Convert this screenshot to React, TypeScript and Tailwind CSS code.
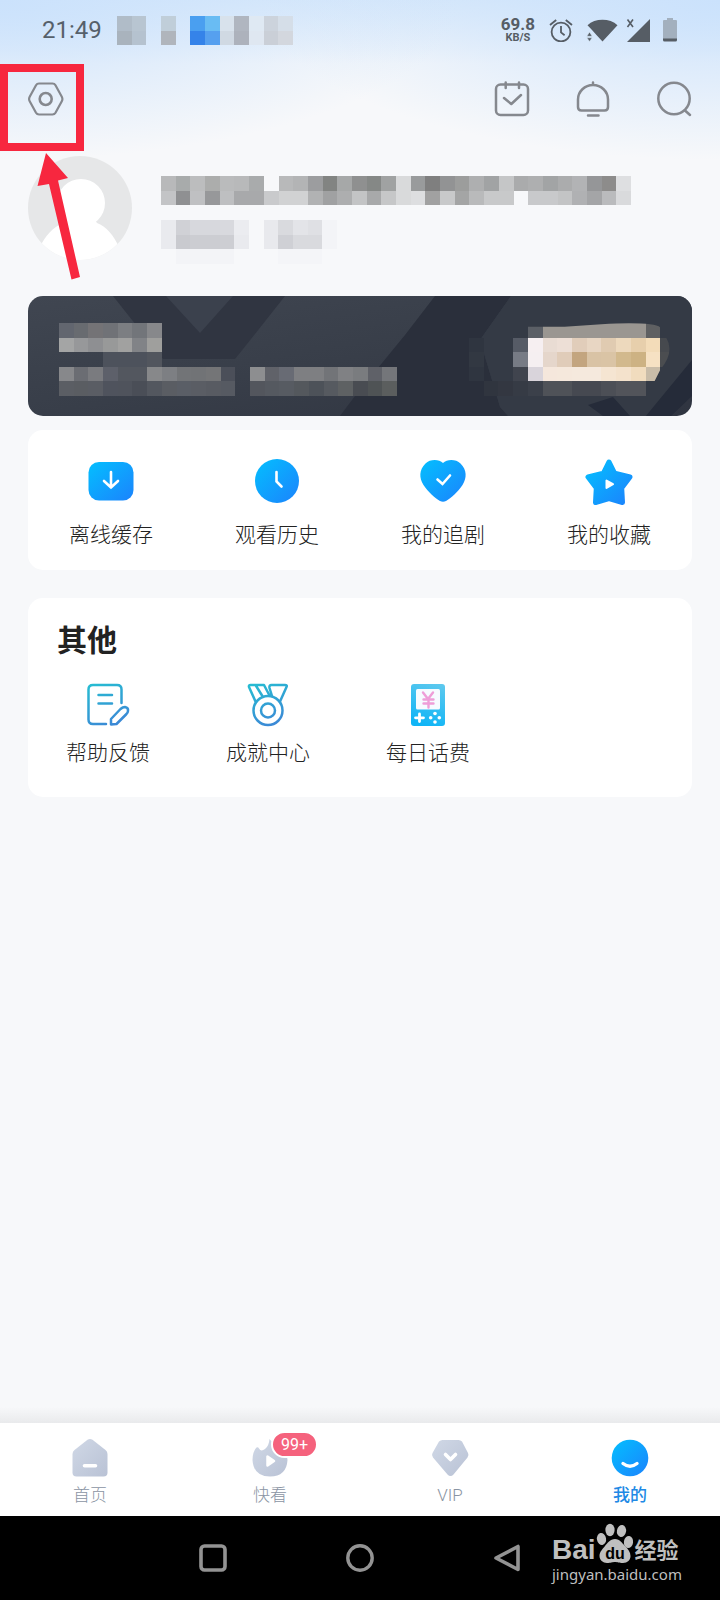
import React from "react";

type Row = string[];

const _ = "";

const STATUS_CELLS: Row[] = [
  ["#b0bcc8", "#b8c5d1", _, "#c0ced9", _, "#4a9ff0", "#69bcf3", "#d8e2ec", "#b0b6c0", "#dfe9f3", "#ccd3dc", "#d5dee8"],
  ["#a9b3bd", "#b5c2cf", _, "#b0b5bc", _, "#3583e9", "#56a0ef", "#d0d9e3", "#adb2bc", "#dfe7f1", "#cacfd7", "#d3d7de"],
];

const NAME_CELLS: Row[] = [
  ["#b8b9ba", "#a8abab", "#bcbdbe", "#acadac", "#babbbc", "#b8b9ba", "#a9abac", _, "#b8b9ba", "#b3b4b5", "#9c9d9f", "#828482", "#a6a8a8", "#8f9090", "#858886", "#a0a2a2", "#d9dadb", "#999b9c", "#7f7f7f", "#929394", "#9c9d9c", "#aeafb0", "#a1a3a4", "#c5c6c7", "#aaabac", "#aeafb0", "#a2a4a5", "#abacad", "#b2b3b5", "#959698", "#8d8c8b", "#dedfe1"],
  ["#c3c4c6", "#8f9092", "#bfc0c2", "#97989a", "#bebfc1", "#a8a9ab", "#a8a9ab", "#c9cacc", "#d1d2d3", "#d1d2d3", "#b1b2b3", "#a0a1a2", "#adaeaf", "#c3c4c5", "#a8a9aa", "#c6c7c8", "#d9dadb", "#dddee0", "#a1a1a1", "#c8c9ca", "#a4a5a5", "#b9babb", "#c8c9ca", "#c8c9ca", _, "#c8c9cb", "#c8c9cb", "#c3c4c5", "#b0b1b3", "#a4a5a7", "#babbbd", "#d9dadc"],
];

const TAG_CELLS: Row[] = [
  ["#e9eaee", "#d0d1d6", "#d7d8dd", "#d7d8dd", "#d8d9de", "#ebecf0", _, "#e8e9ed", "#d9dade", "#e3e4e8", "#dfe0e4", "#f3f4f7"],
  ["#e9eaee", "#c9cacf", "#cccdd2", "#cccdd2", "#cdced3", "#e9eaee", _, "#e8e9ed", "#cfd0d5", "#d9dade", "#d9dade", "#f3f4f7"],
  [_, "#f3f4f7", "#f3f4f7", "#f3f4f7", "#f3f4f7", _, _, _, "#f4f5f8", "#f4f5f8", "#f4f5f8", _],
];

const VIP_CELLS: Row[] = [
  ["#62666f", "#686b70", "#747376", "#707277", "#7c7e82", "#72757a", "#87888b"],
  ["#a4a5a5", "#97989a", "#8e8f92", "#989999", "#a1a1a0", "#818387", "#9f9f9d"],
  [_, _, _, "#4d525c", "#4d525c", "#4d525c", "#52565e"],
  ["#87888b", "#6b6d73", "#7a7b7f", "#5d606a", "#53575f", "#53575f", "#87888a", "#7d7f83", "#727477", "#717376", "#747577", "#4b4f59", _, "#8d8e90", "#606269", "#686b74", "#7e7f82", "#7e7f82", "#727478", "#808184", "#7a7c7f", "#5f6168", "#74767a"],
  ["#5b5e64", "#5a5d62", "#5a5d64", "#4f535d", "#4f535c", "#4a4e57", "#53575f", "#5a5d63", "#5a5e66", "#5a5d64", "#585b62", "#565a62", _, "#53565d", "#555960", "#575b62", "#54585d", "#4d5259", "#565a60", "#5e6163", "#494c52", "#4f5355", "#5b5e5e"],
];

const VIP_BUTTON_CELLS: Row[] = [
  [_, _, _, _, "#5b5f66", "#9a9691", "#9a9691", "#9a9691", "#9a9691", "#9a9691", "#9a9691", "#9a9691", "#5f6062", _],
  ["#2f3540", _, _, "#565b66", "#f6eff1", "#e9dcd3", "#eddfd6", "#e1cdba", "#e8d6c3", "#e0cbb1", "#edd9bd", "#e7cfac", "#f3dcb9", "#46494e"],
  ["#323842", _, _, "#777b85", "#f5eff1", "#e5d6cb", "#e0ccb9", "#c3a57f", "#d9c3a5", "#dac4a5", "#d2b98d", "#cdb283", "#f6e1c3", "#4b4d50"],
  ["#2f3540", _, _, "#40444e", "#d9d4db", "#f5e7dc", "#f5e8dc", "#f5e9dd", "#f5e9dd", "#f5e5d2", "#f4e2cc", "#f1dcbe", "#c9bca8", _],
  [_, "#30353f", "#333741", "#363b45", "#3b404a", "#4f5258", "#4f5258", "#464951", "#464951", "#4c4f56", "#52545a", "#52545a", _, _],
];

function Mosaic({ rows, className, clip }: { rows: Row[]; className: string; clip?: string }) {
  const cols = Math.max(...rows.map((r) => r.length));
  return (
    <svg
      className={className}
      viewBox={`0 0 ${cols} ${rows.length}`}
      preserveAspectRatio="none"
      shapeRendering="crispEdges"
      aria-hidden="true"
    >
      {clip && (
        <clipPath id="mosaicClip">
          <path d={clip} />
        </clipPath>
      )}
      <g clipPath={clip ? "url(#mosaicClip)" : undefined}>
        {rows.map((row, y) =>
          row.map((fill, x) => fill && <rect key={`${x}-${y}`} x={x} y={y} width="1" height="1" fill={fill} />)
        )}
      </g>
    </svg>
  );
}

/* Shared gradients for the icons */
function Gradients() {
  return (
    <svg className="absolute w-0 h-0" aria-hidden="true">
      <defs>
        <linearGradient id="blue" x1="0" y1="0" x2="1" y2="1">
          <stop offset="0.1" stopColor="#06b9fe" />
          <stop offset="0.95" stopColor="#1a86fd" />
        </linearGradient>
        <linearGradient id="gray" x1="0" y1="0" x2="1" y2="1">
          <stop offset="0" stopColor="#d0d8e6" />
          <stop offset="1" stopColor="#b9c2d5" />
        </linearGradient>
        <linearGradient id="line" gradientUnits="userSpaceOnUse" x1="10" y1="3" x2="28" y2="46">
          <stop offset="0" stopColor="#27bbd2" />
          <stop offset="1" stopColor="#3c87d6" />
        </linearGradient>
        <linearGradient id="game" x1="0.8" y1="0" x2="0.5" y2="1">
          <stop offset="0" stopColor="#5cc8ee" />
          <stop offset="1" stopColor="#10b5f6" />
        </linearGradient>
      </defs>
    </svg>
  );
}

function StatusBar() {
  return (
    <div className="flex h-[60px] items-center justify-between pl-[42px] pr-[43px] text-[#56606a]">
      <div className="flex items-center gap-[15px]">
        <span className="text-2xl">21:49</span>
        <Mosaic rows={STATUS_CELLS} className="w-[176px] h-[29px]" />
      </div>
      <div className="flex items-center">
        <div className="mr-[14px] flex flex-col items-center font-bold text-[#565d65]">
          <span className="text-[17px] leading-4">69.8</span>
          <span className="text-[11px] leading-3">KB/S</span>
        </div>
        <svg className="mr-[13px] w-6 h-6" viewBox="0 0 24 24" fill="none" stroke="#565d65" strokeWidth="1.8">
          <circle cx="12" cy="14" r="9.4" />
          <path d="M12 8v6.4l3.6 2.8M1 7l6.200-5M23 7l-6.200-5" />
        </svg>
        <svg className="mr-2 w-8 h-6" viewBox="0 0 32 24" fill="#565d65">
          <path d="M1.500 7.200C9 0 24 0 31.500 7.200L16.500 23.500l-5.800-6.200L6 12z" />
          <path d="M.8 18.300L3.500 14l2.700 4.300zM.8 19.800h5.400L3.500 23.500z" stroke="#d8e9f9" strokeWidth="0.6" />
        </svg>
        <svg className="mr-[13px] w-6 h-6" viewBox="0 0 24 24" fill="#565d65">
          <path d="M24 1v23H1z" />
          <path d="M1.500 1.500l5.500 7.500M7 1.500L1.500 9" stroke="#565d65" strokeWidth="1.600" />
        </svg>
        <svg className="w-[14px] h-6" viewBox="0 0 14 24">
          <path d="M4 2V0h6v2h3q1 0 1 1v18H0V3q0-1 1-1z" fill="#a3b0be" />
          <path d="M0 20.500h14V22q0 1.500-1.500 1.500h-11Q0 23.500 0 22z" fill="#565d65" />
        </svg>
      </div>
    </div>
  );
}

function Header() {
  return (
    <header className="flex items-center justify-between px-7 pt-[21px]">
      <button type="button" aria-label="设置">
        <svg className="block w-9 h-9" viewBox="0 0 36 36" fill="none" stroke="#85888e" strokeWidth="2.200">
          <path d="M11 2.500h13.500q2 0 3 1.700l6.300 11.500q1.200 2.300 0 4.600l-6.300 11.500q-1 1.700-3 1.700H11q-2 0-3-1.700L1.700 20.300q-1.200-2.300 0-4.600L8 4.200q1-1.700 3-1.700z" />
          <circle cx="17.700" cy="18" r="6" strokeWidth="2.600" />
        </svg>
      </button>
      <div className="flex gap-[45px]">
        <button type="button" aria-label="签到">
          <svg className="block w-9 h-9" viewBox="0 0 36 36" fill="none" stroke="#85888e" strokeWidth="2.500" strokeLinecap="round" strokeLinejoin="round">
            <rect x="2" y="3.500" width="32" height="30.500" rx="4.500" />
            <path d="M11.700 1.500v5.500M25 1.500v5.500M10 17l7.300 6L27 14" />
          </svg>
        </button>
        <button type="button" aria-label="消息">
          <svg className="block w-9 h-9" viewBox="0 0 36 36" fill="none" stroke="#85888e" strokeWidth="2.500" strokeLinecap="round">
            <path d="M18 1.500V4M3 18.500a15 14.500 0 0 1 30 0V26q0 3.500-3.500 3.500h-23Q3 29.500 3 26zM13 34.500h10.500" />
          </svg>
        </button>
        <button type="button" aria-label="搜索">
          <svg className="block w-9 h-9" viewBox="0 0 36 36" fill="none" stroke="#85888e" strokeWidth="2.500" strokeLinecap="round">
            <circle cx="18" cy="17.500" r="15.700" />
            <path d="M29 29.500l5 4.500" />
          </svg>
        </button>
      </div>
    </header>
  );
}

function Profile() {
  return (
    <section className="mt-[39px] flex gap-[29px] px-7">
      <svg className="w-[104px] h-[104px] shrink-0" viewBox="0 0 104 104">
        <clipPath id="avatar">
          <circle cx="52" cy="52" r="52" />
        </clipPath>
        <g clipPath="url(#avatar)">
          <rect width="104" height="104" fill="#e6e7e8" />
          <circle cx="53" cy="47" r="24" fill="#fff" />
          <path d="M37 64h30l2 3c9 3 17 13 22 24v13H12V91c5-11 13-20 23-24z" fill="#fff" />
        </g>
      </svg>
      <div className="flex min-w-0 flex-col items-start gap-[15px] pt-5">
        <Mosaic rows={NAME_CELLS} className="w-[470px] h-[29px] max-w-full" />
        <Mosaic rows={TAG_CELLS} className="w-[176px] h-[44px]" />
      </div>
    </section>
  );
}

function VipCard() {
  return (
    <section className="relative mx-7 mt-8 flex h-[120px] items-start justify-between overflow-hidden rounded-[15px] bg-linear-to-br from-[#404651] via-[#383e49] to-[#2f3440] pl-[31px] pr-[17px] pt-[27px]">
      <svg className="absolute inset-0 w-full h-full" viewBox="0 0 664 120" preserveAspectRatio="none" aria-hidden="true">
        <path d="M85 0h172l-30 38-20 25h-72z" fill="#303541" />
        <path d="M138 0h67l-33 37z" fill="#3b414d" />
        <path d="M407 0h76l-31 44 20 67 8 9H312l15-20 50-61z" fill="#2a2f3b" />
        <path d="M483 0h181v64l-46 56H480l-8-9-20-67z" fill="#343a45" />
        <path d="M560 109l25-8 17 19h-27zM664 64v36l-21 20h-25z" fill="#252b39" />
      </svg>
      <Mosaic rows={VIP_CELLS} className="relative w-[338px] h-[73px]" />
      <button type="button" aria-label="VIP" className="relative">
        <Mosaic
          rows={VIP_BUTTON_CELLS}
          className="block w-[206px] h-[73px]"
          clip="M0 0.250H6.500L9 0.080Q12.500-0.100 13 0.300V1h0.400Q14 2 13 3.200L12.600 4V5H0z"
        />
      </button>
    </section>
  );
}

const QUICK_LINKS = [
  {
    label: "离线缓存",
    icon: (
      <>
        <rect x="1.500" y="5" width="45" height="38.500" rx="10.500" fill="url(#blue)" />
        <path d="M24 15v15.500M17 24l7 6.500 7-6.500" fill="none" stroke="#fff" strokeWidth="2.600" strokeLinecap="round" />
      </>
    ),
  },
  {
    label: "观看历史",
    icon: (
      <>
        <circle cx="24" cy="24" r="22" fill="url(#blue)" />
        <path d="M23.500 15v9.500l5 5" fill="none" stroke="#fff" strokeWidth="2.600" strokeLinecap="round" />
      </>
    ),
  },
  {
    label: "我的追剧",
    icon: (
      <>
        <path d="M24 6C20 2 11 2 6.500 6.500C0 13 0 21 4.500 28C9 35 16 41 21 44Q24 45.500 27 44C32 41 39 35 43.500 28C48 21 48 13 41.500 6.500C37 2 28 2 24 6z" fill="url(#blue)" />
        <path d="M18.500 22.500l5 4.500 7.500-8.500" fill="none" stroke="#fff" strokeWidth="2.600" strokeLinecap="round" />
      </>
    ),
  },
  {
    label: "我的收藏",
    icon: (
      <path
        d="M24 5L29.700 16.300L45 20L36.700 31L37.500 45.500L24 41.500L10.500 45.500L11.300 31L3 20L18.300 16.300z"
        fill="url(#blue)"
        stroke="url(#blue)"
        strokeWidth="5"
        strokeLinejoin="round"
      />
    ),
    overlay: <path d="M21.500 23.500v7.500l6.500-3.800z" fill="#fff" stroke="#fff" strokeWidth="2" strokeLinejoin="round" />,
  },
];

const OTHER_LINKS = [
  {
    label: "帮助反馈",
    icon: (
      <g fill="none" stroke="url(#line)" strokeWidth="2.500" strokeLinecap="round" strokeLinejoin="round">
        <path d="M37.500 22V8.500q0-4.500-4.500-4.500H9Q4.500 4 4.500 8.500v30q0 4.500 4.500 4.500h13" />
        <path d="M14.500 14.010h13.500M14.500 22.510h13.500" />
        <path d="M27 43.500v-5.500L36.500 28q2.200-2 4.500-2 3.500.6 3 4 0 1.500-2 3.500L32.500 43z" />
      </g>
    ),
  },
  {
    label: "成就中心",
    icon: (
      <g fill="none" stroke="url(#line)" strokeWidth="2.500" strokeLinecap="round" strokeLinejoin="round">
        <circle cx="24" cy="29.500" r="14.500" />
        <circle cx="24" cy="29.500" r="7" />
        <path d="M11.500 20.500L5 6Q4.500 4 6.500 4H20l5.500 10.500M11.500 4L19 16M28 15l-2.500-8q-.5-3 2-3H41q2.500 0 1.500 2L36 20.500" />
      </g>
    ),
  },
  {
    label: "每日话费",
    icon: (
      <>
        <rect x="7" y="3" width="34" height="42" rx="3" fill="url(#game)" />
        <rect x="12" y="8" width="24" height="20.500" rx="1.500" fill="#f6fbff" />
        <path d="M19 11.500l5 6.500 5-6.500M24.500 18v8.500M19.500 18.500h10M19.500 22.500h10" fill="none" stroke="#ee9ed8" strokeWidth="2.400" strokeLinecap="round" />
        <path d="M15.500 33v7.500M11.500 36.800h8" stroke="#fff" strokeWidth="2.800" strokeLinecap="round" />
        <g fill="#fff">
          <circle cx="31" cy="32.500" r="1.800" />
          <circle cx="31" cy="41" r="1.800" />
          <circle cx="26.700" cy="36.800" r="1.800" />
          <circle cx="35.300" cy="36.800" r="1.800" />
        </g>
      </>
    ),
  },
];

type LinkItemProps = {
  label: string;
  icon: React.ReactNode;
  overlay?: React.ReactNode;
  className: string;
};

function LinkItem({ label, icon, overlay, className }: LinkItemProps) {
  return (
    <a href="#" className={`flex flex-col items-center text-[21px] font-light leading-7 text-[#222] ${className}`}>
      <svg className="w-12 h-12" viewBox="0 0 48 48">
        {icon}
        {overlay}
      </svg>
      <span>{label}</span>
    </a>
  );
}

const TABS = [
  {
    label: "首页",
    icon: (
      <>
        <path d="M17.500 1.800Q20 0 22.500 1.800L35.500 12q2 1.700 2 4V34.500q0 4-4 4h-27q-4 0-4-4V16q0-2.300 2-4z" fill="url(#gray)" />
        <path d="M14.500 27.700h11" stroke="#fff" strokeWidth="3.600" strokeLinecap="round" />
      </>
    ),
  },
  {
    label: "快看",
    badge: "99+",
    icon: (
      <>
        <path d="M19.500 1Q23 6 30 9Q37.500 14 37.500 22Q36.500 38.500 20 38.500T2.500 22Q2.500 14 6.500 9.500Q8 8.500 9 10.500Q11 14 15 11Q19 8 19.500 1z" fill="url(#gray)" />
        <path d="M17.500 18.500v9l6.500-4.500z" fill="#fff" stroke="#fff" strokeWidth="2.500" strokeLinejoin="round" />
      </>
    ),
  },
  {
    label: "VIP",
    icon: (
      <>
        <path d="M9 3.500Q10.500 2 12.500 2h16Q30.500 2 32 3.500l6 11.500q1.300 2.500-.5 4.500L23.500 36.500q-3 3-6 0L3 19.500Q1.200 17.500 2.500 15z" fill="url(#gray)" />
        <path d="M15.500 16.500l5 5 5-5" fill="none" stroke="#fff" strokeWidth="3.600" strokeLinecap="round" strokeLinejoin="round" />
      </>
    ),
  },
  {
    label: "我的",
    active: true,
    icon: (
      <>
        <circle cx="20" cy="20" r="18.300" fill="url(#blue)" />
        <path d="M13 25.500q7 5.500 14 0" fill="none" stroke="#fff" strokeWidth="3.400" strokeLinecap="round" />
      </>
    ),
  },
];

function TabBar() {
  return (
    <>
      <div className="h-4 bg-linear-to-b from-transparent to-[#e9eaec]" />
      <nav className="grid grid-cols-4 bg-white pt-[15px] pb-[9px]">
        {TABS.map((tab) => (
          <a
            key={tab.label}
            href="#"
            className={`flex flex-col items-center gap-[5px] text-[17px] leading-6 ${tab.active ? "font-medium text-[#2089e5]" : "font-light text-[#8a94a3]"}`}
          >
            <span className="relative">
              <svg className="block w-10 h-10" viewBox="0 0 40 40">
                {tab.icon}
              </svg>
              {tab.badge && (
                <span className="absolute left-[21px] -top-[7px] rounded-full border-2 border-white bg-[#f5627d] px-2 text-[16px] font-normal leading-[23px] text-white">
                  {tab.badge}
                </span>
              )}
            </span>
            <span>{tab.label}</span>
          </a>
        ))}
      </nav>
    </>
  );
}

function Watermark() {
  return (
    <div className="absolute right-10 bottom-4 flex w-32 flex-col text-[#bfbfbf]">
      <div className="flex items-end">
        <span className="font-[family-name:Liberation_Sans] text-[28px] font-bold leading-7">Bai</span>
        <svg className="-ml-px w-10 h-[42px] shrink-0" viewBox="0 0 40 42">
          <g fill="#bfbfbf">
            <ellipse cx="6.500" cy="17" rx="4.600" ry="6" transform="rotate(-10 6.500 17)" />
            <ellipse cx="15" cy="8" rx="4.600" ry="6.200" />
            <ellipse cx="26.500" cy="9" rx="4.600" ry="6" transform="rotate(10 26.500 9)" />
            <ellipse cx="33.500" cy="20" rx="4.600" ry="6" transform="rotate(8 33.500 20)" />
            <path d="M20 17c5 0 7 4 10 7s5.500 6 5.500 10-3 7-7.500 7-5-1-8-1-4 1-8 1-7.500-3-7.500-7 3-7 5.500-10 5-7 10-7z" />
          </g>
          <text x="20" y="37" textAnchor="middle" fontFamily="Liberation Sans" fontSize="16" fontWeight="bold" fill="#000">
            du
          </text>
        </svg>
        <span className="shrink-0 text-[22px] font-bold leading-[26px]">经验</span>
      </div>
      <span className="font-[family-name:Noto_Sans] text-[15px] leading-5">jingyan.baidu.com</span>
    </div>
  );
}

function SystemBar() {
  return (
    <footer className="relative bg-black py-7">
      <div className="mx-auto grid w-[441px] grid-cols-3 justify-items-center">
        <button type="button" aria-label="最近任务">
          <svg className="block w-7 h-7" viewBox="0 0 28 28" fill="none" stroke="#939393" strokeWidth="3.600">
            <rect x="2" y="2" width="24" height="24" rx="3.500" />
          </svg>
        </button>
        <button type="button" aria-label="主屏幕">
          <svg className="block w-7 h-7" viewBox="0 0 28 28" fill="none" stroke="#939393" strokeWidth="3.400">
            <circle cx="14" cy="14" r="12.200" />
          </svg>
        </button>
        <button type="button" aria-label="返回">
          <svg className="block w-7 h-7" viewBox="0 0 28 28" fill="none" stroke="#939393" strokeWidth="3.600" strokeLinejoin="round">
            <path d="M25 2.500v23L3 14z" />
          </svg>
        </button>
      </div>
      <Watermark />
    </footer>
  );
}

/* Red frame and arrow pointing at the settings button */
function Callout() {
  return (
    <div className="pointer-events-none absolute left-0 top-16">
      <div className="h-[87px] w-[84px] border-8 border-[#f7273f]" />
      <svg className="ml-9 mt-0.5 h-[128px] w-[46px]" viewBox="0 0 46 128" fill="#f7273f">
        <path d="M10 0l22 25-10 2.500L44 124l-8.500 2.500L13 31 1.500 33z" />
      </svg>
    </div>
  );
}

export default function App() {
  return (
    <div className="relative flex min-h-screen flex-col bg-[#f7f8fa] font-[family-name:Roboto,'Noto_Sans_CJK_SC',sans-serif]">
      <Gradients />
      <div className="flex-1 bg-[radial-gradient(ellipse_460px_160px_at_0_0,#cbe2fc,#f7f8fa00),radial-gradient(ellipse_460px_160px_at_100%_0,#cbe2fc,#f7f8fa00),linear-gradient(#d9e9fa,#f7f8fa00_64px)]">
        <StatusBar />
        <Header />
        <Profile />
        <VipCard />

        <section className="mx-7 mt-[14px] grid grid-cols-4 rounded-[15px] bg-white pt-[27px] pb-[21px]">
          {QUICK_LINKS.map((link) => (
            <LinkItem key={link.label} {...link} className="gap-4" />
          ))}
        </section>

        <section className="mx-7 mt-7 rounded-[15px] bg-white pt-[23px] pb-[30px]">
          <h2 className="mb-5 pl-[29px] text-[30px] font-bold leading-10 text-[#222]">其他</h2>
          <div className="grid grid-cols-4 pr-6">
            {OTHER_LINKS.map((link) => (
              <LinkItem key={link.label} {...link} className="gap-[10px]" />
            ))}
          </div>
        </section>
      </div>
      <TabBar />
      <SystemBar />
      <Callout />
    </div>
  );
}
